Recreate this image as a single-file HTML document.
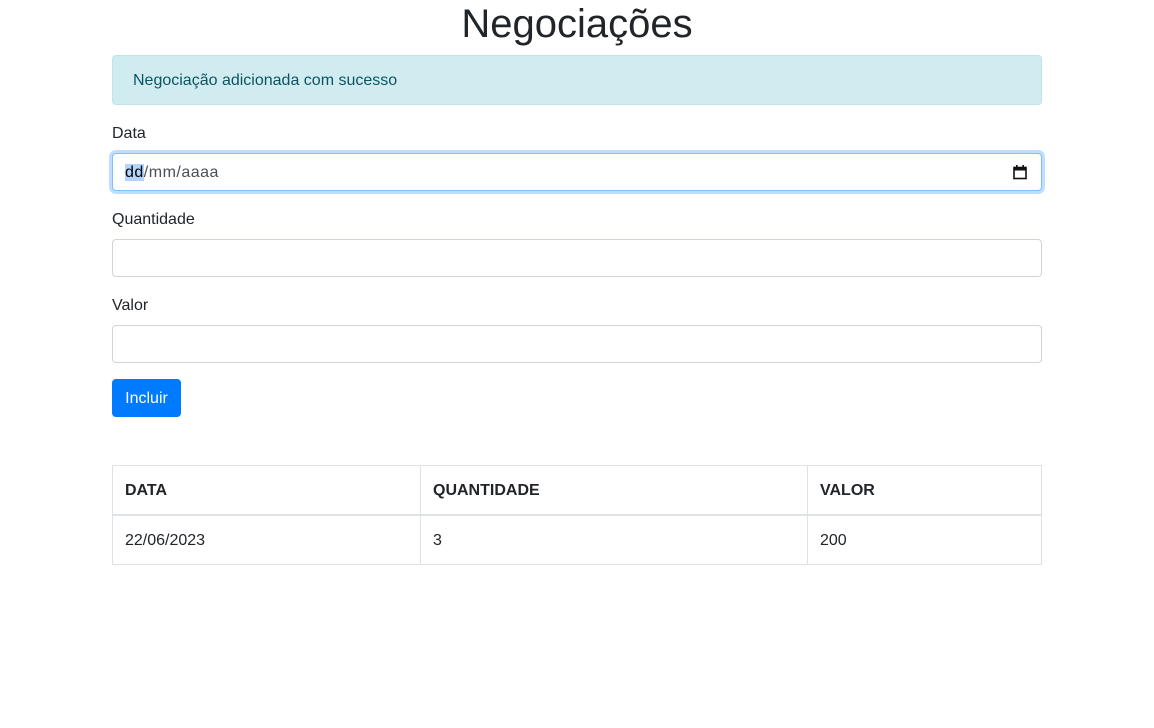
<!DOCTYPE html>
<html><head><meta charset="utf-8"><style>
*{box-sizing:border-box}
body{margin:0;font-family:"Liberation Sans",sans-serif;color:#212529;font-size:16px;background:#fff}
.c{position:absolute;left:112px;width:930px}
h1{position:absolute;top:0;left:0;width:1154px;text-align:center;margin:0;font-weight:500;font-size:40px;line-height:48px}
.alert{top:55px;height:50px;background:#d1ecf1;border:1px solid #bee5eb;color:#0c5460;border-radius:4px;padding:15px 20px 0;line-height:20px}
.lbl{line-height:20px}
.in{height:38px;border:1px solid #ced4da;border-radius:4px;background:#fff}
.focus{border-color:#80bdff;box-shadow:0 0 0 3px rgba(0,123,255,.25);padding:9px 12px 0;line-height:20px;color:#495057;letter-spacing:0.5px}
.sel{background:#b3d4fc;color:#000}
.btn{position:absolute;left:112px;top:379px;width:69px;height:38px;background:#007bff;color:#fff;border-radius:4px;text-align:center;line-height:40px}
table{position:absolute;left:112px;top:465px;width:930px;border-collapse:collapse}
td,th{border:1px solid #dee2e6;padding:13px 12px 11px;text-align:left;height:49px;line-height:24px}
th{border-bottom:2px solid #dee2e6;font-weight:bold}
</style></head><body>
<h1>Negociações</h1>
<div class="c alert">Negociação adicionada com sucesso</div>
<div class="c lbl" style="top:124px">Data</div>
<div class="c in focus" style="top:153px"><span class="sel">dd</span>/mm/aaaa
<svg style="position:absolute;right:14px;top:11px" width="14" height="15" viewBox="0 0 14 15"><rect x="1" y="2.5" width="12" height="11" fill="none" stroke="#111" stroke-width="1.6"/><rect x="1" y="2.5" width="12" height="3" fill="#111"/><rect x="3" y="0" width="1.6" height="3" fill="#111"/><rect x="9.4" y="0" width="1.6" height="3" fill="#111"/></svg></div>
<div class="c lbl" style="top:210px">Quantidade</div>
<div class="c in" style="top:239px"></div>
<div class="c lbl" style="top:296px">Valor</div>
<div class="c in" style="top:325px"></div>
<div class="btn">Incluir</div>
<table><tr><th style="width:308px">DATA</th><th style="width:387px">QUANTIDADE</th><th>VALOR</th></tr>
<tr><td>22/06/2023</td><td>3</td><td>200</td></tr></table>
</body></html>
